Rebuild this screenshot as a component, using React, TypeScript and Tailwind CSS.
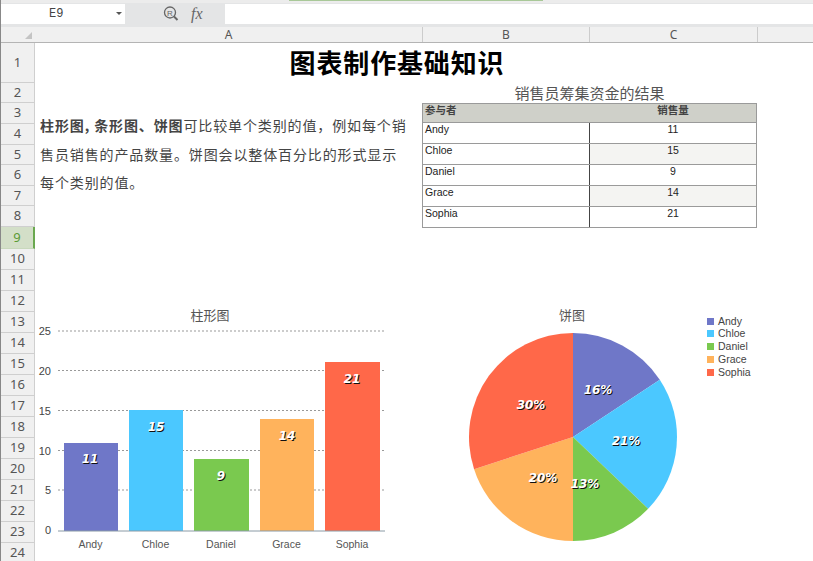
const rows = [
  { n: 1, h: "h-[40px]" },
  { n: 2, h: "h-[20px]" },
  { n: 3, h: "h-[21px]" },
  { n: 4, h: "h-[21px]" },
  { n: 5, h: "h-[20px]" },
  { n: 6, h: "h-[21px]" },
  { n: 7, h: "h-[20px]" },
  { n: 8, h: "h-[21px]" },
  { n: 9, h: "h-[22px]" },
  ...[10, 11, 12, 13, 14, 15, 16, 17, 18, 19, 20, 21, 22, 23, 24].map((n) => ({ n, h: "h-[21px]" })),
];

const data = [
  { name: "Andy", value: 11, color: "#6f77c8" },
  { name: "Chloe", value: 15, color: "#4bc8ff" },
  { name: "Daniel", value: 9, color: "#7ac94f" },
  { name: "Grace", value: 14, color: "#ffb35c" },
  { name: "Sophia", value: 21, color: "#ff6849" },
];

const font = "'Liberation Sans', Arial, sans-serif";
const labelFont = "'DejaVu Sans', sans-serif";

function DataLabel({ x, y, children }: { x: number; y: number; children: string }) {
  return (
    <g fontFamily={labelFont} fontSize="12" fontStyle="italic" fontWeight="700" textAnchor="middle">
      <text x={x + 1} y={y + 1} fill="#111">{children}</text>
      <text x={x} y={y} fill="#fff">{children}</text>
    </g>
  );
}

function BarChart() {
  // svg origin sits at page x=35, y=300
  const bars = [
    { x: 29, w: 54, top: 143, lx: 55, ly: 163 },
    { x: 94, w: 54, top: 110, lx: 121, ly: 131 },
    { x: 159, w: 55, top: 159, lx: 186, ly: 180 },
    { x: 225, w: 54, top: 119, lx: 252, ly: 140 },
    { x: 290, w: 55, top: 62, lx: 317, ly: 83 },
  ];
  const ticks = [
    { v: "25", y: 31 },
    { v: "20", y: 70.5 },
    { v: "15", y: 110.5 },
    { v: "10", y: 150.5 },
    { v: "5", y: 190 },
  ];
  return (
    <svg width="388" height="261" className="block shrink-0">
      <text x="175" y="20" textAnchor="middle" fontSize="13" fill="#555" fontFamily="'Noto Sans CJK SC', sans-serif">柱形图</text>
      {ticks.map((t) => (
        <g key={t.v}>
          <line x1="23" x2="350" y1={t.y} y2={t.y} stroke="#999" strokeDasharray="2 2" />
          <text x="16" y={t.y + 4} textAnchor="end" fontSize="11" fill="#444" fontFamily={font}>{t.v}</text>
        </g>
      ))}
      <text x="16" y="234" textAnchor="end" fontSize="11" fill="#444" fontFamily={font}>0</text>
      {data.map((d, i) => (
        <g key={d.name}>
          <rect x={bars[i].x} y={bars[i].top} width={bars[i].w} height={231 - bars[i].top} fill={d.color} />
          <DataLabel x={bars[i].lx} y={bars[i].ly}>{String(d.value)}</DataLabel>
          <text x={bars[i].x + bars[i].w / 2 - 0.5} y="248" textAnchor="middle" fontSize="10.5" fill="#555" fontFamily={font}>{d.name}</text>
        </g>
      ))}
      <line x1="23" x2="350" y1="231" y2="231" stroke="#8a9aa5" />
    </svg>
  );
}

function PieChart() {
  // svg origin sits at page x=423, y=300
  const cx = 150;
  const cy = 137;
  const r = 104;
  const total = data.reduce((s, d) => s + d.value, 0);
  let acc = 0;
  const slices = data.map((d) => {
    const a0 = (acc / total) * Math.PI * 2 - Math.PI / 2;
    acc += d.value;
    const a1 = (acc / total) * Math.PI * 2 - Math.PI / 2;
    const large = a1 - a0 > Math.PI ? 1 : 0;
    const path = `M${cx} ${cy}L${cx + r * Math.cos(a0)} ${cy + r * Math.sin(a0)}A${r} ${r} 0 ${large} 1 ${cx + r * Math.cos(a1)} ${cy + r * Math.sin(a1)}Z`;
    return { ...d, path };
  });
  const labels = [
    { t: "16%", x: 175, y: 94 },
    { t: "21%", x: 203, y: 145 },
    { t: "13%", x: 162, y: 188 },
    { t: "20%", x: 120, y: 182 },
    { t: "30%", x: 108, y: 109 },
  ];
  const legendY = [18, 30, 43, 56, 69];
  return (
    <svg width="390" height="261" className="block shrink-0">
      <text x="149" y="20" textAnchor="middle" fontSize="13" fill="#555" fontFamily="'Noto Sans CJK SC', sans-serif">饼图</text>
      {slices.map((s) => (
        <path key={s.name} d={s.path} fill={s.color} />
      ))}
      {labels.map((l) => (
        <DataLabel key={l.t} x={l.x} y={l.y}>{l.t}</DataLabel>
      ))}
      {data.map((d, i) => (
        <g key={d.name}>
          <rect x="284" y={legendY[i]} width="7" height="7" fill={d.color} />
          <text x="295" y={legendY[i] + 7} fontSize="10.5" fill="#444" fontFamily={font}>{d.name}</text>
        </g>
      ))}
    </svg>
  );
}

function SalesTable() {
  return (
    <div className="w-[335px] shrink-0 font-['Liberation_Sans','Noto_Sans_CJK_SC',sans-serif] text-[10.5px] leading-[13px] text-[#222]">
      <div className="flex h-[20px] border border-[#9a9a9a] bg-[#cfd0c9] font-bold text-[#444]">
        <div className="w-[167px] pl-[2px]">参与者</div>
        <div className="flex-1 text-center">销售量</div>
      </div>
      <div className="border-x border-b border-[#9a9a9a]">
        {data.map((d, i) => (
          <div key={d.name} className={i < 4 ? "flex h-[21px] border-b border-[#9a9a9a]" : "flex h-[20px]"}>
            <div className="w-[167px] border-r border-[#444] pl-[2px]">{d.name}</div>
            <div className={i % 2 === 1 ? "flex-1 bg-[#f4f4f2] text-center" : "flex-1 text-center"}>{d.value}</div>
          </div>
        ))}
      </div>
    </div>
  );
}

export default function App() {
  return (
    <div className="flex h-[561px] w-[813px] flex-col overflow-hidden border-l border-[#888] bg-white">
      <div className="flex h-[3px] shrink-0 bg-[#ececec]">
        <div className="ml-[288px] h-px w-[254px] bg-[#a8c898]" />
      </div>
      {/* formula bar */}
      <div className="flex h-[24px] shrink-0 items-start bg-[#e4e5e6] pt-px">
        <div className="relative flex h-[20px] w-[124px] items-center bg-white pl-[48px] font-['Liberation_Mono',monospace] text-[12px] text-[#444]">
          E9
          <span className="absolute right-[3px] top-[8px] h-0 w-0 border-x-[3px] border-t-[3px] border-x-transparent border-t-[#555]" />
        </div>
        <div className="flex h-[20px] w-[100px] items-center">
          <svg width="18" height="18" viewBox="0 0 18 18" fill="none" stroke="#666" className="ml-[37px]">
            <circle cx="8" cy="7.5" r="5.5" strokeWidth="1.3" />
            <path d="M12 11.5l3.5 3.5" strokeWidth="2" />
            <text x="8" y="10.5" fontSize="8" textAnchor="middle" fill="#666" stroke="none" fontFamily={font}>R</text>
          </svg>
          <span className="ml-[11px] font-['Liberation_Serif',serif] text-[16px] italic text-[#666]">fx</span>
        </div>
        <div className="h-[20px] flex-1 bg-white" />
      </div>
      {/* column headers */}
      <div className="flex h-[16px] shrink-0 border-b border-[#b4b4b4] bg-[#f0f0f0] font-['Noto_Sans',sans-serif] text-[12px] leading-[15px] text-[#555]">
        <div className="relative w-[34px]">
          <span className="absolute bottom-[3px] right-[3px] h-0 w-0 border-b-[7px] border-l-[7px] border-b-[#c4c4c4] border-l-transparent" />
        </div>
        <div className="w-[388px] border-r border-[#ccc] text-center">A</div>
        <div className="w-[167px] border-r border-[#ccc] text-center">B</div>
        <div className="w-[168px] border-r border-[#ccc] text-center">C</div>
      </div>
      <div className="flex min-h-0 flex-1">
        {/* row headers */}
        <div className="w-[34px] shrink-0 font-['Noto_Sans',sans-serif] text-[13px] text-[#555]">
          {rows.map((r) => (
            <div
              key={r.n}
              className={
                r.n === 9
                  ? `flex ${r.h} items-center justify-center border-b border-r-2 border-[#c8d8bc] border-r-[#6aa84f] bg-[#d3dfc8] text-[#5a9a35]`
                  : `flex ${r.h} items-center justify-center border-b border-r border-[#cfcfcf] bg-[#f0f0f0]`
              }
            >
              {r.n}
            </div>
          ))}
        </div>
        {/* sheet */}
        <div className="min-w-0 flex-1">
          <div className="flex h-[40px] w-[722px] items-center justify-center pb-[4px] pl-[2px] font-['Noto_Sans_CJK_SC',serif] text-[26px] font-bold tracking-[0.85px] text-black">
            图表制作基础知识
          </div>
          <div className="flex h-[20px] w-[722px] items-center justify-end">
            <div className="w-[335px] text-center font-['Noto_Sans_CJK_SC',sans-serif] text-[15px] text-[#555]">销售员筹集资金的结果</div>
          </div>
          <div className="flex h-[197px]">
            <div className="w-[387px] shrink-0 pl-[5px] pr-[14px] pt-[8px] font-['Noto_Sans_CJK_SC',sans-serif] text-[14px] leading-[28.5px] tracking-[0.88px] text-[#444]">
              <span className="font-bold">柱形图, 条形图、饼图</span>可比较单个类别的值，例如每个销售员销售的产品数量。饼图会以整体百分比的形式显示每个类别的值。
            </div>
            <SalesTable />
          </div>
          <div className="flex">
            <BarChart />
            <PieChart />
          </div>
        </div>
      </div>
    </div>
  );
}
